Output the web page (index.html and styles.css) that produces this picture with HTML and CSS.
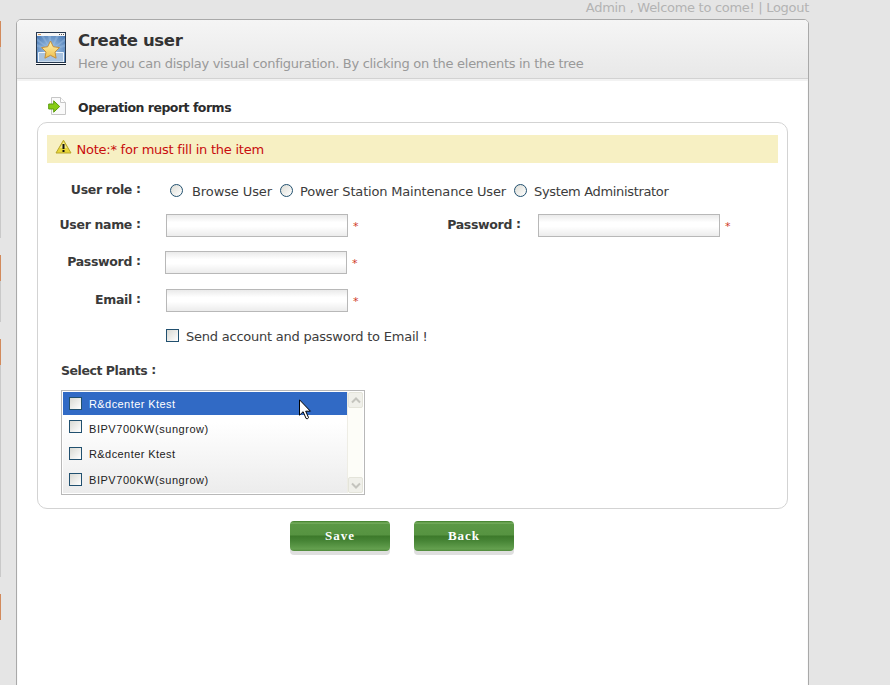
FILE: index.html
```html
<!DOCTYPE html>
<html lang="en">
<head>
<meta charset="utf-8">
<title>Create user</title>
<link rel="stylesheet" href="styles.css">
</head>
<body>
<div class="shell">
  <aside class="rail"><i class="tab t1"></i><i class="line l1"></i><i class="tab t2"></i><i class="line l2"></i><i class="tab t3"></i><i class="line l3"></i><i class="tab t4"></i></aside>
  <main class="page">
    <div class="account"><span>Admin , Welcome to come! | Logout</span></div>
    <section class="panel">
      <header class="head">
        <svg class="app-icon" width="30" height="33" viewBox="0 0 30 33">
          <defs>
            <radialGradient id="sky" cx=".5" cy=".6" r=".7"><stop offset="0" stop-color="#a9cbe9"/><stop offset="1" stop-color="#4777b4"/></radialGradient>
            <linearGradient id="gold" x1="0" y1="0" x2="0" y2="1"><stop offset="0" stop-color="#fff2ad"/><stop offset="1" stop-color="#efc04d"/></linearGradient>
          </defs>
          <rect x=".5" y=".5" width="29" height="30" fill="url(#sky)" stroke="#26384f"/>
          <path d="M15 18L1 6v3zM15 18L5 4h3zM15 18L12 4h3zM15 18L20 4h3zM15 18L29 6v3zM15 18L29 12v3zM15 18L1 12v3z" fill="#a9c9e8" opacity=".35"/>
          <rect x="1" y="1" width="28" height="3" fill="#f7f7f7"/>
          <path d="M2 2.500h3" stroke="#d49a5c"/><path d="M23 2.500h5" stroke="#555" stroke-dasharray="1 1"/>
          <path d="M2.500 30V20.500h25V30z" fill="#a9c3df" stroke="#edf4fb"/>
          <path d="M1 30.500h28" stroke="#26384f"/>
          <path d="M14.500 9l2.800 5.700 6.200.9-4.500 4.400 1.100 6.200-5.600-2.900-5.600 2.900L10 20l-4.500-4.400 6.200-.9z" fill="url(#gold)" stroke="#c58f3b" stroke-linejoin="round"/>
          <path d="M0 32.500h30" stroke="#111c28"/><path d="M0 31.500h30" stroke="#fff"/>
        </svg>
        <div>
          <h1><span>Create user</span></h1>
          <p class="sub"><span>Here you can display visual configuration. By clicking on the elements in the tree</span></p>
        </div>
      </header>
      <div class="title">
        <svg width="20" height="20" viewBox="0 0 20 20">
          <path d="M4.500 1.500h9l5 5v12h-14z" fill="#fafafa" stroke="#c6c6c6"/>
          <path d="M13.500 1.500v5h5" fill="#fff" stroke="#c6c6c6"/>
          <path d="M1.700 8h5V4.800l6 5.700-6 5.700V13h-5z" fill="#86cc12" stroke="#5c9c10" stroke-linejoin="round"/>
        </svg>
        <h2>Operation report forms</h2>
      </div>
      <form class="box">
        <div class="note">
          <svg width="17" height="16" viewBox="0 0 17 16">
            <path d="M8.500 1.200L16 14H1z" fill="#e8d63a" stroke="#b7a52b" stroke-linejoin="round"/>
            <path d="M8.500 3L12 9H5z" fill="#f4ec92"/>
            <path d="M8.500 5v5M8.500 11v2" stroke="#111" stroke-width="2"/>
          </svg>
          <span>Note:* for must fill in the item</span>
        </div>
        <div class="row role">
          <div class="label">User role<b>:</b></div>
          <label class="radio r1"><i></i><span>Browse User</span></label>
          <label class="radio r2"><i></i><span>Power Station Maintenance User</span></label>
          <label class="radio r3"><i></i><span>System Administrator</span></label>
        </div>
        <div class="row name">
          <div class="label w-name">User name<b>:</b></div>
          <div class="input"></div><em>*</em>
          <div class="label second">Password<b>:</b></div>
          <div class="input"></div><em>*</em>
        </div>
        <div class="row pass">
          <div class="label">Password<b>:</b></div>
          <div class="input"></div><em>*</em>
        </div>
        <div class="row mail">
          <div class="label">Email<b>:</b></div>
          <div class="input"></div><em>*</em>
        </div>
        <label class="send"><i class="check"></i><span>Send account and password to Email !</span></label>
        <div class="plants-label">Select Plants<b>:</b></div>
        <div class="list">
          <ul>
            <li class="on"><i class="check"></i><span class="a">R&amp;dcenter Ktest</span></li>
            <li class="up"><i class="check"></i><span class="b">BIPV700KW(sungrow)</span></li>
            <li class="third"><i class="check"></i><span class="a">R&amp;dcenter Ktest</span></li>
            <li><i class="check"></i><span class="b">BIPV700KW(sungrow)</span></li>
          </ul>
          <div class="scroll">
            <div class="arrow"><svg width="10" height="7" viewBox="0 0 10 7"><path d="M1 5.500l4-4 4 4" fill="none" stroke="#c4c4be" stroke-width="2"/></svg></div>
            <div class="arrow"><svg width="10" height="7" viewBox="0 0 10 7"><path d="M1 1.500l4 4 4-4" fill="none" stroke="#c4c4be" stroke-width="2"/></svg></div>
          </div>
          <svg class="cursor" width="13" height="22" viewBox="0 0 13 22"><path d="M.5.8v15.400l3.600-3.500 3 6.800q1.800 1 2.400-1l-2.800-6.300h4.700z" fill="#fff" stroke="#000"/></svg>
        </div>
      </form>
      <div class="actions"><button>Save</button><button>Back</button></div>
    </section>
  </main>
</div>
</body>
</html>
```
FILE: styles.css
```css
* { box-sizing: border-box; margin: 0; padding: 0; }
html, body { height: 100%; overflow: hidden; }
body { background: #e5e5e5; font: 13px "DejaVu Sans", sans-serif; color: #3c3c3c; white-space: nowrap; }
svg, i { display: block; flex: none; }
.shell { display: flex; height: 685px; overflow: hidden; }
.rail { width: 16px; padding-top: 21px; }
.rail i { width: 1px; background: #c9c9c9; }
.rail .tab { height: 26px; background: #d28a5c; }
.rail .l1 { height: 191px; margin-bottom: 17px; }
.rail .l2 { height: 41px; margin-bottom: 17px; }
.rail .l3 { height: 212px; margin-bottom: 17px; }
.page { width: 793px; }
.account { height: 19px; line-height: 15px; text-align: right; color: #b3b3b3; letter-spacing: -.29px; }
.panel { height: 680px; border: 1px solid #a9a9a9; border-radius: 5px; background: #fff; overflow: hidden; box-shadow: inset 0 0 0 1px #fafafa; }
.head { display: flex; height: 61px; padding: 12px 0 0 19px; background: linear-gradient(#f5f5f5, #e8e8e8 58px, #d2d2d2 58px, #d2d2d2 59px, #f2f2f2 59px); }
.head > div { margin-left: 12px; }
h1 { font-size: 16.500px; line-height: 17px; color: #333; letter-spacing: -.35px; }
.sub { margin-top: 6px; line-height: 17px; color: #999; letter-spacing: -.29px; }
.title { display: flex; height: 41px; padding: 15px 0 0 30px; }
.title h2 { margin-left: 11px; font-size: 12.500px; line-height: 24px; color: #2c2c2c; letter-spacing: -.5px; }
.box { width: 751px; height: 387px; margin-left: 20px; border: 1px solid #d3d3d3; border-radius: 10px; padding: 12px 9px 0; }
.note { display: flex; height: 28px; padding: 4px 0 0 8px; background: #f7f0c3; color: #c80d0d; }
.note span { margin-left: 4.500px; line-height: 21px; letter-spacing: -.24px; }
.row { display: flex; align-items: center; }
.label { width: 94px; flex: none; text-align: right; font-size: 12.500px; font-weight: bold; letter-spacing: -.33px; line-height: 20px; color: #3a3a3a; }
.label b, .plants-label b { display: inline-block; width: 9px; text-align: right; letter-spacing: 0; line-height: 14px; position: relative; top: -1px; }
.role { height: 24px; margin-top: 16px; }
.role .label { margin-top: -3px; }
.radio { display: flex; align-items: center; }
.radio i { width: 13px; height: 13px; margin-top: -1px; border: 1px solid #21506f; border-radius: 50%; background: linear-gradient(135deg, #dcdcd5, #fff); }
.radio span { margin: 1px 0 0 9px; line-height: 18px; letter-spacing: -.1px; }
.r1 { width: 110px; margin-left: 29px; }
.r2 { width: 234px; }
.r2 span { margin-left: 7px; letter-spacing: -.18px; }
.r3 span { margin-left: 7px; letter-spacing: -.34px; }
.name { height: 23px; margin-top: 11px; }
.name .label, .pass .label, .mail .label { margin-top: -1px; }
.input { width: 182px; height: 23px; margin-left: 25px; border: 1px solid #b8b8b8; background: linear-gradient(#eaeaea, #fff 35%, #fff 55%, #ececec); }
.row em { margin: 2px 0 0 5px; width: 8px; font: 11px "DejaVu Sans", sans-serif; color: #d03a28; }
.label.second { width: 80px; margin-left: 80px; }
.second + .input { margin-left: 17px; }
.pass { height: 23px; margin-top: 14px; }
.pass .input { margin-left: 24px; }
.mail { height: 23px; margin-top: 15px; }
.send { display: flex; align-items: center; height: 18px; margin: 15px 0 0 119px; }
.check { width: 13px; height: 13px; border: 1px solid #21506f; background: linear-gradient(135deg, #d9d9d3, #fff); }
.send .check { margin-top: -1px; }
.send span { margin: 1px 0 0 7px; letter-spacing: -.23px; }
.plants-label { margin: 16px 0 0 14px; height: 20px; line-height: 20px; font-size: 12.500px; font-weight: bold; letter-spacing: -.45px; }
.list { position: relative; display: flex; width: 304px; height: 105px; margin: 9px 0 0 14px; padding: 1px; border: 1px solid #b8b8b8; }
.list ul { width: 284px; list-style: none; background: linear-gradient(#fff 30%, #ececec); }
.list li { display: flex; align-items: center; height: 26px; padding-left: 6px; font: 11px "Liberation Sans", sans-serif; color: #222; }
.list li span { margin: 1px 0 0 7px; }
.list .a { letter-spacing: .42px; }
.list .b { letter-spacing: .54px; }
.list .on { height: 23px; background: #316ac5; color: #fff; }
.list .up .check { margin-top: -4px; }
.list .third { height: 25px; }
.scroll { display: flex; flex-direction: column; justify-content: space-between; width: 16px; background: #fdfdf8; border-left: 1px solid #eeede5; }
.arrow { display: grid; place-items: center; height: 16px; background: #f0f0ea; border: 1px solid #e4e4da; border-radius: 2px; }
.cursor { position: absolute; left: 237px; top: 8px; }
.actions { display: flex; gap: 24px; margin: 12px 0 0 273px; }
button { width: 100px; height: 30px; border: 0; border-radius: 4px; background: linear-gradient(#498733 0 1px, #85b86c 2px, #5b9845 3px, #569341 14px, #3c792a 15px, #478536 20px, #64a04f 28px, #4f893b); box-shadow: 0 4px 0 #dfdfdf; color: #fff; font: bold 13px "Liberation Serif", serif; letter-spacing: 1px; }
```
